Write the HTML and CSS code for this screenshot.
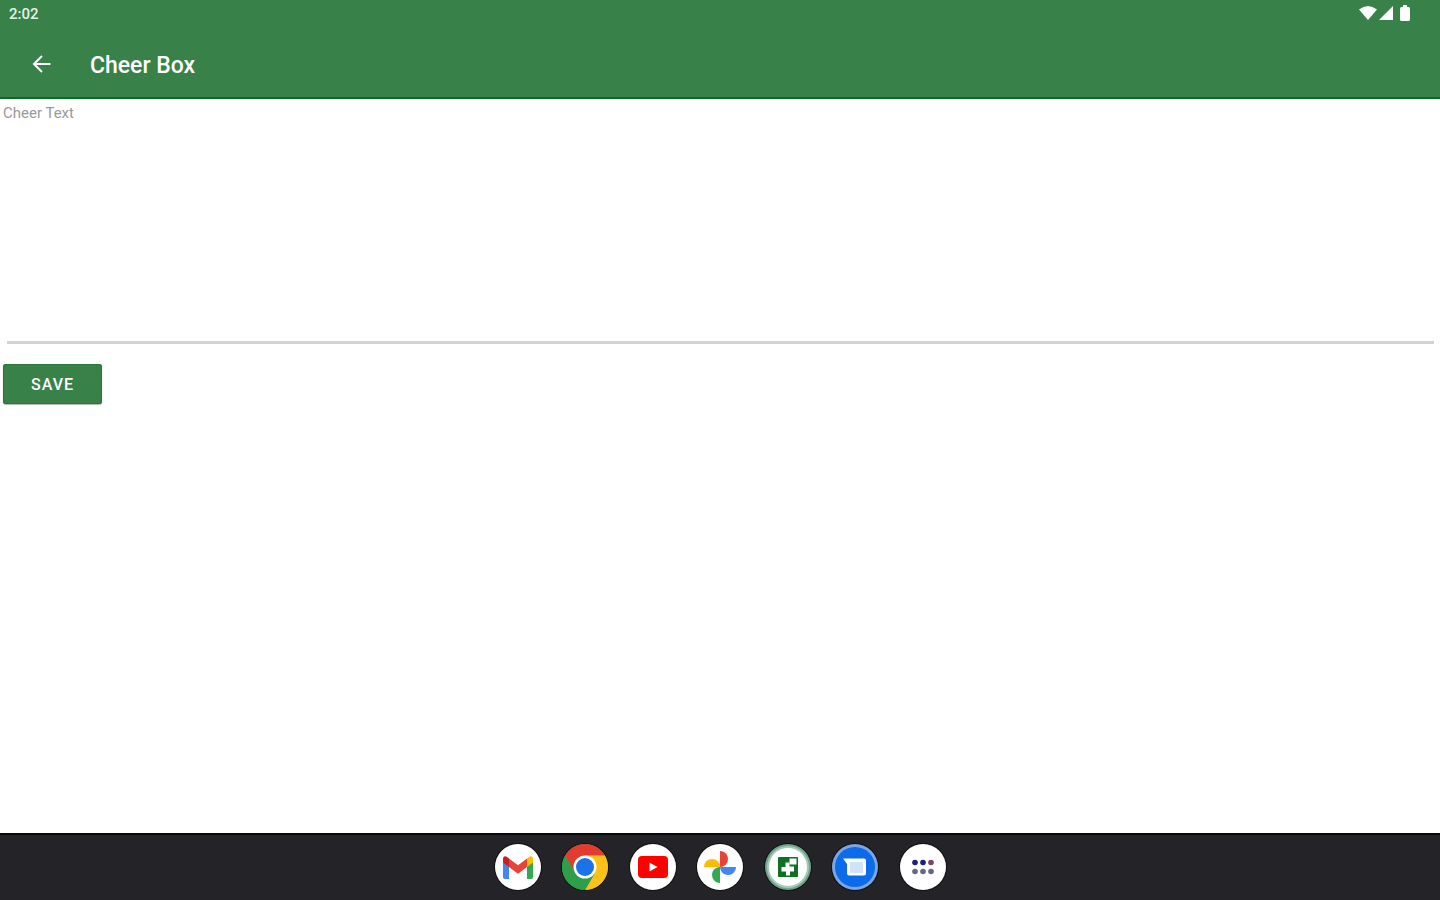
FILE: index.html
```html
<!DOCTYPE html>
<html lang="en">
<head>
  <meta charset="UTF-8">
  <meta name="viewport" content="width=device-width, initial-scale=1">
  <title>Cheer Box</title>
  <link rel="stylesheet" href="styles.css">
</head>
<body>
  <header class="top">
    <div class="status-bar">
      <span class="clock">2:02</span>
      <div class="status-icons">
        <svg width="18" height="16" viewBox="0 0 18 16"><path d="M0 4.500Q9-2.500 18 4.500L9 15z"/></svg>
        <svg width="16" height="16" viewBox="0 0 16 16"><path d="M15 1v14H1z"/></svg>
        <svg width="12" height="18" viewBox="0 0 12 18"><path d="M4 1h4v2h1.500q1.500 0 1.500 1.500v11q0 1.500-1.500 1.500h-7q-1.500 0-1.500-1.500v-11q0-1.500 1.500-1.500h1.500z"/></svg>
      </div>
    </div>
    <div class="app-bar">
      <button class="back" type="button" aria-label="Back">
        <svg width="20" height="20" viewBox="0 0 20 20"><path d="M19.500 10H3.500M11 2L3 10l8 8"/></svg>
      </button>
      <h1>Cheer Box</h1>
    </div>
  </header>

  <main>
    <form class="cheer-form">
      <label for="cheerText">Cheer Text</label>
      <textarea id="cheerText"></textarea>
      <button class="save" type="button">SAVE</button>
    </form>
  </main>

  <footer class="taskbar">
    <nav class="dock">
      <button type="button" aria-label="Gmail">
        <svg viewBox="0 0 46 46">
          <circle cx="23" cy="23" r="23" fill="#fff"/>
          <path fill="#4285f4" d="M8 17l6 4.500V35h-4q-2 0-2-2z"/>
          <path fill="#34a853" d="M38 17l-6 4.500V35h4q2 0 2-2z"/>
          <path fill="#fbbc04" d="M32 14.500l2-1.500c2-1.500 4-.5 4 2v3.500L32 23z"/>
          <path fill="#c5221f" d="M14 14.500L12 13c-2-1.500-4-.5-4 2v3.500L14 23z"/>
          <path fill="#ea4335" d="M14 14.500l9 6.800 9-6.800V23l-9 6.800L14 23z"/>
        </svg>
      </button>
      <button type="button" aria-label="Chrome">
        <svg viewBox="0 0 46 46">
          <circle cx="23" cy="23" r="23" fill="#34a853"/>
          <path fill="#e33b2e" d="M3.100 11.500A23 23 0 0 1 42.900 11.500H23L13 28.700z"/>
          <path fill="#fbc116" d="M42.900 11.500A23 23 0 0 1 23 46L33 28.700 23 11.500z"/>
          <path fill="#2f9e4b" d="M3.100 11.500L13 28.700 23 34.500l10-5.800L23 46A23 23 0 0 1 3.100 11.500z"/>
          <circle cx="23" cy="23" r="11.500" fill="#fff"/>
          <circle cx="23" cy="23" r="9" fill="#1a73e8"/>
        </svg>
      </button>
      <button type="button" aria-label="YouTube">
        <svg viewBox="0 0 46 46">
          <circle cx="23" cy="23" r="23" fill="#fff"/>
          <rect x="8" y="12" width="30" height="22" rx="4" fill="#f00"/>
          <path fill="#fff" d="M19.500 18.500v9l8-4.500z"/>
        </svg>
      </button>
      <button type="button" aria-label="Photos">
        <svg viewBox="0 0 46 46">
          <circle cx="23" cy="23" r="23" fill="#fff"/>
          <path fill="#ea4335" d="M23 7a8 8 0 0 1 0 16z"/>
          <path fill="#4285f4" d="M39 23a8 8 0 0 1-16 0z"/>
          <path fill="#34a853" d="M23 39a8 8 0 0 1 0-16z"/>
          <path fill="#fbbc04" d="M7 23a8 8 0 0 1 16 0z"/>
        </svg>
      </button>
      <button type="button" aria-label="Cheer Box">
        <svg viewBox="0 0 46 46">
          <circle cx="23" cy="23" r="23" fill="#6fa58a"/>
          <circle cx="23" cy="23" r="21" fill="#a5cab8"/>
          <circle cx="23" cy="23" r="19" fill="#fff"/>
          <rect x="13" y="13" width="20" height="20" rx="1" fill="#0d7024"/>
          <path fill="#fff" d="M24.500 14.500h7v6h-7z"/>
          <path fill="#fff" d="M20.500 18.500h4v4h4.500v5h-4v4h-4v-4h-4.500v-4.500h4z"/>
        </svg>
      </button>
      <button type="button" aria-label="Messages">
        <svg viewBox="0 0 46 46">
          <circle cx="23" cy="23" r="23" fill="#7ba5e3"/>
          <circle cx="23" cy="23" r="20" fill="#0b6bea"/>
          <path fill="#fff" d="M11 14.500h21q2 0 2 2v13q0 2-2 2H17q-2 0-2-2V20z"/>
          <rect x="18" y="18" width="13" height="11" fill="#d3e2fb"/>
        </svg>
      </button>
      <button type="button" aria-label="All apps">
        <svg viewBox="0 0 46 46">
          <circle cx="23" cy="23" r="23" fill="#fff"/>
          <g fill="#1d2078">
            <circle cx="15" cy="18.500" r="2.800"/>
            <circle cx="23" cy="18.500" r="2.800"/>
            <circle cx="31" cy="18.500" r="2.800" fill="#7b4468"/>
          </g>
          <g fill="#65687f">
            <circle cx="15" cy="27.500" r="2.800"/>
            <circle cx="23" cy="27.500" r="2.800"/>
            <circle cx="31" cy="27.500" r="2.800"/>
          </g>
        </svg>
      </button>
    </nav>
  </footer>
</body>
</html>
```
FILE: styles.css
```css
* {
  box-sizing: border-box;
}
body {
  margin: 0;
  min-height: 100vh;
  display: flex;
  flex-direction: column;
  font-family: Roboto, Arial, sans-serif;
  background: #fff;
}
button {
  border: 0;
  padding: 0;
  cursor: pointer;
  font-family: inherit;
}
svg {
  display: block;
}

/* Status bar and app bar */
.top {
  background: #388148;
  color: #fff;
  border-bottom: 2px solid #0b6c24;
}
.status-bar {
  height: 28px;
  display: flex;
  align-items: center;
  justify-content: space-between;
  padding: 0 29px 0 9px;
}
.clock {
  font-size: 15px;
  font-weight: 500;
  color: #e4f1e6;
}
.status-icons {
  display: flex;
  align-items: center;
  gap: 1px;
  height: 26px;
  align-self: flex-start;
}
.status-icons svg {
  fill: #fff;
}
.status-icons svg:last-child {
  margin-left: 4px;
}
.app-bar {
  height: 69px;
  display: flex;
  align-items: center;
  padding: 2px 31px 0;
}
.back {
  background: none;
}
.back svg {
  fill: none;
  stroke: #fff;
  stroke-width: 2;
}
.app-bar h1 {
  margin: 4px 0 0 39px;
  font-size: 23px;
  line-height: 28px;
  font-weight: 500;
}

/* Form */
main {
  flex: 1;
}
.cheer-form {
  display: flex;
  flex-direction: column;
  align-items: flex-start;
  padding: 5px 3px;
}
.cheer-form label {
  font-size: 15px;
  line-height: 18px;
  color: #9a9a9a;
}
.cheer-form textarea {
  align-self: stretch;
  height: 222px;
  margin: 0 3px 0 4px;
  border: 0;
  border-bottom: 3px solid #d3d3d3;
  padding: 4px 0;
  font: 18px/24px Roboto, Arial, sans-serif;
  resize: none;
  outline: none;
}
.save {
  width: 99px;
  height: 40px;
  margin-top: 20px;
  border-radius: 3px;
  background: #388148;
  box-shadow: inset 0 0 0 1px #26773a, 0 1px 1px rgba(0, 0, 0, 0.3);
  color: #fff;
  font-size: 16px;
  font-weight: 500;
  letter-spacing: 1px;
}

/* Taskbar */
.taskbar {
  height: 67px;
  display: flex;
  align-items: center;
  justify-content: center;
  padding-bottom: 2px;
  background: #242428;
  border-top: 2px solid #08080a;
}
.dock {
  width: 451px;
  display: flex;
  justify-content: space-between;
}
.dock button {
  width: 46px;
  height: 46px;
  border-radius: 50%;
  background: none;
  box-shadow: 0 0 0 1px #111114;
}
```
